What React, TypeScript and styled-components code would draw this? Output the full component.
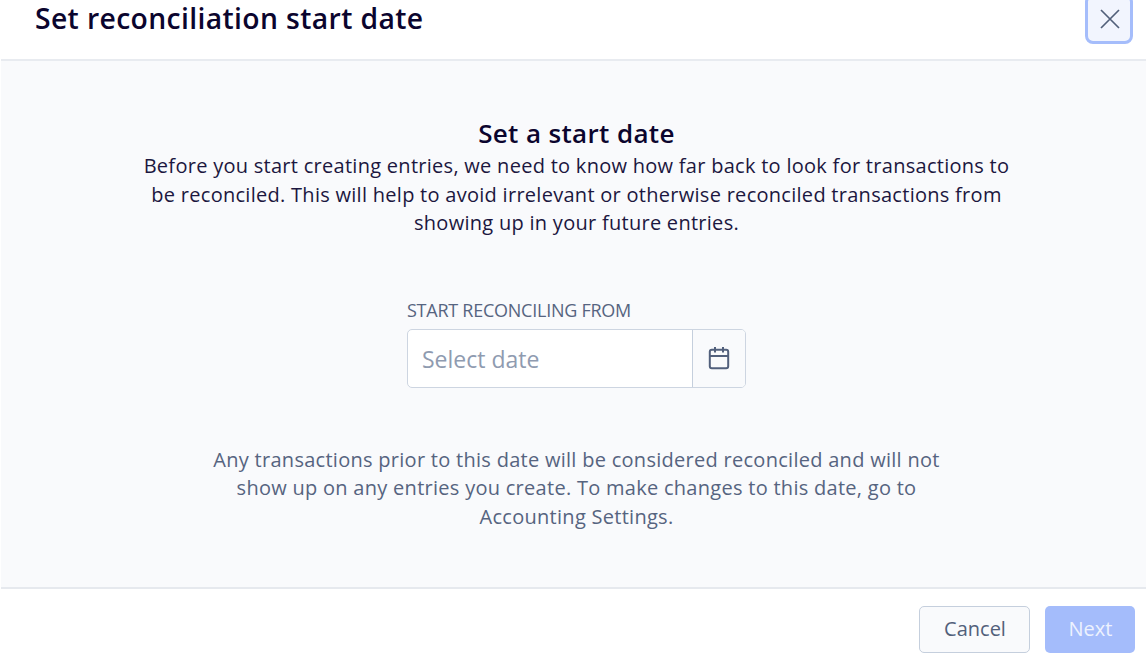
import React from "react";

import styled, { createGlobalStyle } from "styled-components";

const GlobalStyle = createGlobalStyle`
  * {
    box-sizing: border-box;
  }

  body {
    margin: 0;
    background: #fff;
    color: #0b052e;
    font-family: "Open Sans", sans-serif;
    overflow: hidden;
  }
`;

const Modal = styled.div`
  display: flex;
  flex-direction: column;
  height: 666px;
`;

const Header = styled.header`
  display: flex;
  justify-content: space-between;
  height: 61px;
  margin-left: 1px;
  padding: 0 13px 0 34px;
  border-bottom: 2px solid #e8ebf0;
`;

const Title = styled.h1`
  margin: 0;
  font-size: 28.3px;
  line-height: 36px;
  font-weight: 600;
  letter-spacing: 0.37px;
`;

const CloseButton = styled.button`
  display: flex;
  align-items: center;
  justify-content: center;
  width: 48px;
  height: 50px;
  margin-top: -6px;
  padding: 0 0 0 1px;
  border: 3px solid #a5bdfb;
  border-radius: 8px;
  background: #f2f5fe;
  color: #52607a;
`;

const Body = styled.main`
  display: flex;
  flex-direction: column;
  align-items: center;
  height: 528px;
  margin-left: 1px;
  padding: 55px 0 0 6px;
  background: #f9fafc;
  border-bottom: 2px solid #e6e9ee;
`;

const Heading = styled.h2`
  margin: 0 0 2px;
  font-size: 26px;
  line-height: 34px;
  font-weight: 600;
  letter-spacing: 0.36px;
`;

const Text = styled.p<{ $muted?: boolean }>`
  margin: 0;
  font-size: 20px;
  line-height: 28.6px;
  letter-spacing: 0.28px;
  text-align: center;
  white-space: nowrap;
  color: ${({ $muted }) => ($muted ? "#566480" : "#1c1740")};
`;

const Field = styled.div`
  width: 339px;
  margin: 60px 0 58px;
`;

const Label = styled.label`
  display: block;
  font-size: 18px;
  line-height: 24px;
  letter-spacing: -0.25px;
  margin-bottom: 7px;
  color: #566480;
`;

const DateInput = styled.div`
  display: flex;
  height: 59px;
  border: 1.5px solid #cdd5e1;
  border-radius: 5px;
  background: #fff;
  overflow: hidden;
`;

const Placeholder = styled.span`
  flex: 1;
  padding-left: 14px;
  font-size: 23px;
  line-height: 59px;
  color: #8f9bb0;
`;

const CalendarButton = styled.button`
  display: flex;
  align-items: center;
  justify-content: center;
  width: 53px;
  padding: 0 0 1px;
  border: 0;
  border-left: 1px solid #c5cfdd;
  background: #f9fafc;
  color: #52607c;
`;

const Footer = styled.footer`
  display: flex;
  justify-content: flex-end;
  gap: 15px;
  padding: 17px 11px 0 0;
`;

const Button = styled.button<{ $primary?: boolean }>`
  width: ${({ $primary }) => ($primary ? 90 : 111)}px;
  height: 47px;
  padding: 0 0 2px 1px;
  border: ${({ $primary }) => ($primary ? "0" : "1px solid #c5cfdd")};
  border-radius: 5px;
  background: ${({ $primary }) => ($primary ? "#a4bcfb" : "#f9fafc")};
  color: ${({ $primary }) => ($primary ? "#edf2fe" : "#52607a")};
  font-family: inherit;
  font-size: 20px;
`;

const App = () => {
  return (
    <Modal>
      <GlobalStyle />
      <Header>
        <Title>Set reconciliation start date</Title>
        <CloseButton aria-label="Close">
          <svg width="20" height="20" viewBox="0 0 20 20" stroke="currentColor" strokeWidth="1.7">
            <path d="M1 1l18 18M19 1L1 19" />
          </svg>
        </CloseButton>
      </Header>
      <Body>
        <Heading>Set a start date</Heading>
        <Text>
          Before you start creating entries, we need to know how far back to look for transactions to
          <br />
          be reconciled. This will help to avoid irrelevant or otherwise reconciled transactions from
          <br />
          showing up in your future entries.
        </Text>
        <Field>
          <Label>START RECONCILING FROM</Label>
          <DateInput>
            <Placeholder>Select date</Placeholder>
            <CalendarButton aria-label="Open calendar">
              <svg width="22" height="24" viewBox="0 0 22 24" fill="none" stroke="currentColor" strokeWidth="2">
                <rect x="1.8" y="3.8" width="18.4" height="18.4" rx="2" />
                <path d="M1.8 10h18.4M7 1v5.5M15 1v5.5" />
              </svg>
            </CalendarButton>
          </DateInput>
        </Field>
        <Text $muted>
          Any transactions prior to this date will be considered reconciled and will not
          <br />
          show up on any entries you create. To make changes to this date, go to
          <br />
          Accounting Settings.
        </Text>
      </Body>
      <Footer>
        <Button>Cancel</Button>
        <Button $primary>Next</Button>
      </Footer>
    </Modal>
  );
};

export default App;
